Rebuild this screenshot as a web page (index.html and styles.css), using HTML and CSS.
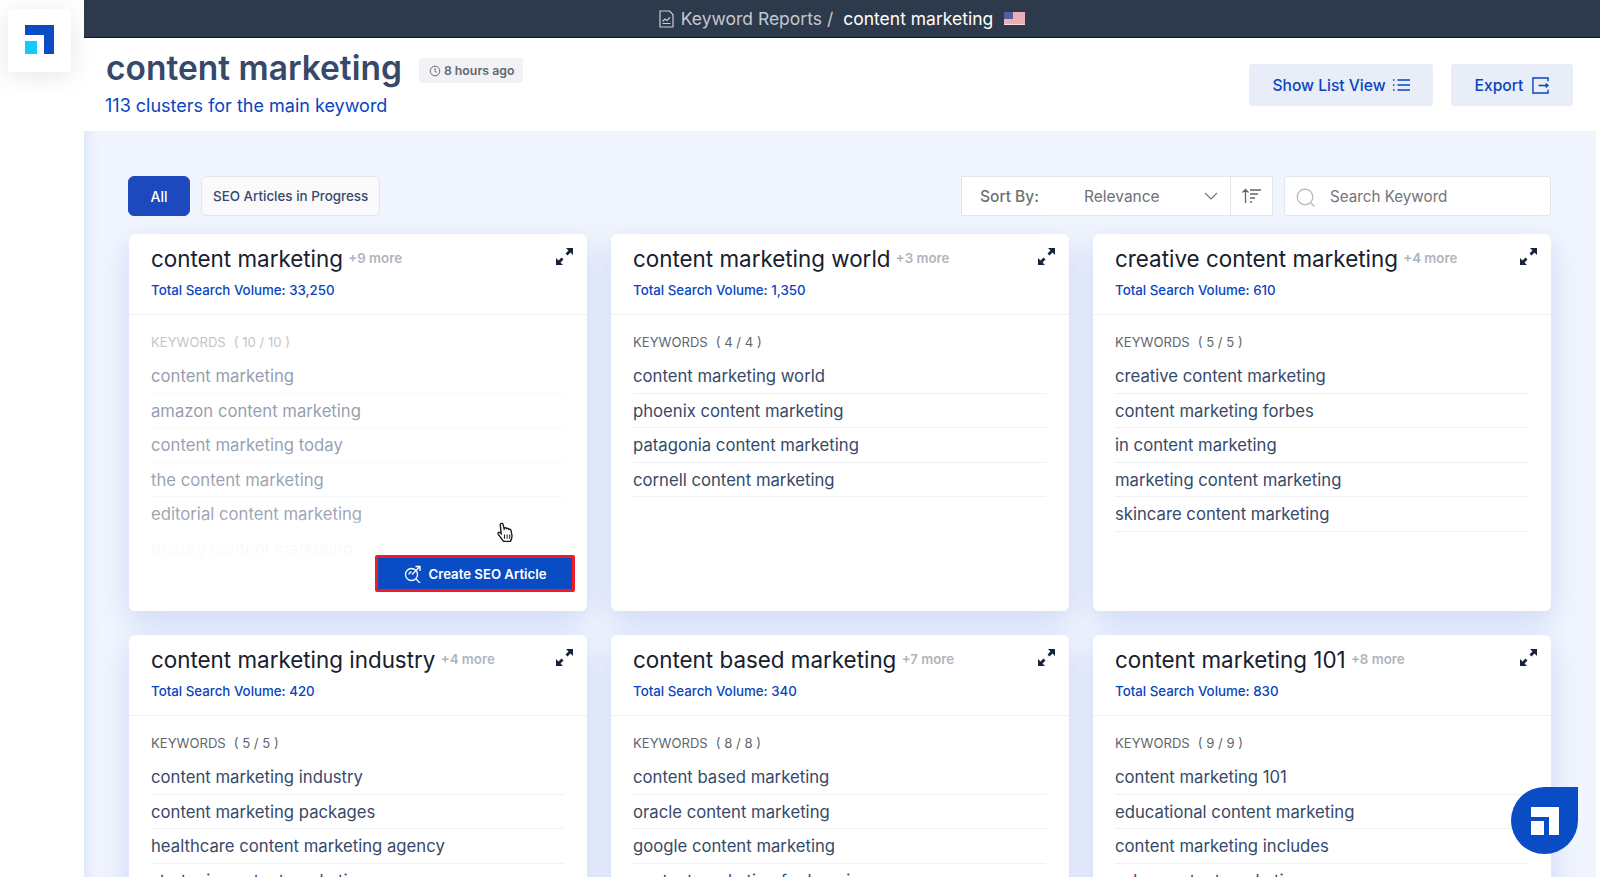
FILE: index.html
```html
<!DOCTYPE html>
<html lang="en">
<head>
<meta charset="utf-8">
<title>content marketing</title>
<link rel="stylesheet" href="styles.css">
</head>
<body>
<aside class="rail">
  <div class="logo-box">
    <svg width="29" height="29" viewBox="0 0 29 29"><path d="M0 0h29v29H19V10H0z" fill="#0a4cc4"/><rect y="16" width="12" height="13" fill="#12ccff"/></svg>
  </div>
</aside>
<div class="page">
  <div class="topbar">
    <svg class="doc" width="15" height="18" viewBox="0 0 15 18" fill="none" stroke="#c9ced6" stroke-width="1.200"><path d="M1 1h9.500L14 4.500V17H1z"/><path d="M3.500 13.500h8M3.500 11.500l2.500-2.500 2 1.500 3-3"/></svg>
    <span class="crumb">Keyword Reports /</span>
    <span class="crumb-current">content marketing</span>
    <svg class="flag" width="21" height="13" viewBox="0 0 21 13"><rect width="21" height="13" fill="#f4dfe2"/><path d="M0 1h21M0 3h21M0 5h21M0 7h21M0 9h21M0 11h21" stroke="#e2808c" stroke-width="1"/><rect width="9" height="7" fill="#565d9c"/></svg>
  </div>
  <header class="head">
    <div class="head-left">
      <div class="title-row">
        <h1>content marketing</h1>
        <span class="ago"><svg width="12" height="12" viewBox="0 0 12 12" fill="none" stroke="#6b6f76"><circle cx="6" cy="6" r="4.800"/><path d="M6 3v3.200l2 1.300"/></svg>8 hours ago</span>
      </div>
      <p class="sub">113 clusters for the main keyword</p>
    </div>
    <div class="head-actions">
      <button class="soft-btn list-btn">Show List View
        <svg width="17" height="14" viewBox="0 0 17 14" fill="none" stroke="#0a44c0" stroke-width="1.500"><path d="M4.500 2H17M4.500 7H17M4.500 12H17M0 2h1.500M0 7h1.500M0 12h1.500"/></svg>
      </button>
      <button class="soft-btn export-btn">Export
        <svg width="17" height="17" viewBox="0 0 18 18" fill="none" stroke="#0a44c0" stroke-width="1.500"><path d="M17 4.500V1H1v16h16v-3.500M7 9h10M14.500 6.800 17 9l-2.500 2.200"/></svg>
      </button>
    </div>
  </header>
  <main class="main">
    <div class="toolbar">
      <div class="tabs">
        <button class="tab tab-on">All</button>
        <button class="tab">SEO Articles in Progress</button>
      </div>
      <div class="tools">
        <div class="sort">
          <span class="sort-label">Sort By:</span>
          <span class="sort-value">Relevance</span>
          <svg width="14" height="8" viewBox="0 0 14 8" fill="none" stroke="#6f7277" stroke-width="1.100"><path d="M1 1l6 6 6-6"/></svg>
        </div>
        <div class="sort-dir">
          <svg width="21" height="16" viewBox="0 0 21 16" fill="none" stroke="#62666c" stroke-width="1.300"><path d="M4.500 15V1.500M1.500 4.500l3-3 3 3M9 2h11M9 6h8M9 10h5M9 14h2"/></svg>
        </div>
        <div class="search">
          <svg width="20" height="20" viewBox="0 0 20 20" fill="none" stroke="#b4b7bb" stroke-width="1.200"><circle cx="9" cy="9" r="7.800"/><path d="M15 15l3.500 3.500"/></svg>
          <span>Search Keyword</span>
        </div>
      </div>
    </div>
    <section class="grid">
      <article class="card card-hover">
        <div class="card-head">
          <h2>content marketing <small>+9 more</small></h2>
          <p class="volume">Total Search Volume: 33,250</p>
          <svg class="expand" width="17" height="17" viewBox="0 0 17 17" fill="#16233a"><path d="M10 0h7v7l-2.500-2.500-3 3-2-2 3-3zM0 10l2.500 2.500 3-3 2 2-3 3L7 17H0z"/></svg>
        </div>
        <div class="card-body">
          <p class="kw-label">KEYWORDS<span>( 10 / 10 )</span></p>
          <ul class="kw-list">
            <li>content marketing</li>
            <li>amazon content marketing</li>
            <li>content marketing today</li>
            <li>the content marketing</li>
            <li>editorial content marketing</li>
            <li>beauty content marketing</li>
          </ul>
        </div>
        <div class="fade"></div>
        <button class="create">
          <svg width="18" height="18" viewBox="0 0 18 18" fill="none" stroke="#fff" stroke-width="1.300"><circle cx="7.500" cy="9.500" r="6"/><path d="M12 14l4 4M8 9.500 15.500 2M11.500 1.500h4.500V6M5 9.500a2.500 2.500 0 0 1 2.500-2.500"/></svg>
          Create SEO Article
        </button>
        <svg class="hand" width="18" height="22" viewBox="0 0 17 21"><path d="M4.500 1.500c1-.6 2 0 2.200 1l1 4 .3-.8c.9-.5 1.800-.2 2.100.6.900-.5 1.800-.2 2.100.7.900-.3 1.800.1 2 1l1 5c.2 2-.5 3.500-1.500 5.500H7l-5-7c-.6-1 .4-2.200 1.600-1.400l1.300 1L4 3c-.1-.6 0-1.200.5-1.500z" fill="#fff" stroke="#1a1a1a" stroke-width="1.300"/><path d="M8 12v4M10.500 12v4M13 12v4" stroke="#1a1a1a"/></svg>
      </article>
      <article class="card">
        <div class="card-head">
          <h2>content marketing world <small>+3 more</small></h2>
          <p class="volume">Total Search Volume: 1,350</p>
          <svg class="expand" width="17" height="17" viewBox="0 0 17 17" fill="#16233a"><path d="M10 0h7v7l-2.500-2.500-3 3-2-2 3-3zM0 10l2.500 2.500 3-3 2 2-3 3L7 17H0z"/></svg>
        </div>
        <div class="card-body">
          <p class="kw-label">KEYWORDS<span>( 4 / 4 )</span></p>
          <ul class="kw-list">
            <li>content marketing world</li>
            <li>phoenix content marketing</li>
            <li>patagonia content marketing</li>
            <li>cornell content marketing</li>
          </ul>
        </div>
      </article>
      <article class="card">
        <div class="card-head">
          <h2>creative content marketing <small>+4 more</small></h2>
          <p class="volume">Total Search Volume: 610</p>
          <svg class="expand" width="17" height="17" viewBox="0 0 17 17" fill="#16233a"><path d="M10 0h7v7l-2.500-2.500-3 3-2-2 3-3zM0 10l2.500 2.500 3-3 2 2-3 3L7 17H0z"/></svg>
        </div>
        <div class="card-body">
          <p class="kw-label">KEYWORDS<span>( 5 / 5 )</span></p>
          <ul class="kw-list">
            <li>creative content marketing</li>
            <li>content marketing forbes</li>
            <li>in content marketing</li>
            <li>marketing content marketing</li>
            <li>skincare content marketing</li>
          </ul>
        </div>
      </article>
      <article class="card">
        <div class="card-head">
          <h2>content marketing industry <small>+4 more</small></h2>
          <p class="volume">Total Search Volume: 420</p>
          <svg class="expand" width="17" height="17" viewBox="0 0 17 17" fill="#16233a"><path d="M10 0h7v7l-2.500-2.500-3 3-2-2 3-3zM0 10l2.500 2.500 3-3 2 2-3 3L7 17H0z"/></svg>
        </div>
        <div class="card-body">
          <p class="kw-label">KEYWORDS<span>( 5 / 5 )</span></p>
          <ul class="kw-list">
            <li>content marketing industry</li>
            <li>content marketing packages</li>
            <li>healthcare content marketing agency</li>
            <li>strategic content marketing</li>
          </ul>
        </div>
      </article>
      <article class="card">
        <div class="card-head">
          <h2>content based marketing <small>+7 more</small></h2>
          <p class="volume">Total Search Volume: 340</p>
          <svg class="expand" width="17" height="17" viewBox="0 0 17 17" fill="#16233a"><path d="M10 0h7v7l-2.500-2.500-3 3-2-2 3-3zM0 10l2.500 2.500 3-3 2 2-3 3L7 17H0z"/></svg>
        </div>
        <div class="card-body">
          <p class="kw-label">KEYWORDS<span>( 8 / 8 )</span></p>
          <ul class="kw-list">
            <li>content based marketing</li>
            <li>oracle content marketing</li>
            <li>google content marketing</li>
            <li>content marketing for hospice</li>
          </ul>
        </div>
      </article>
      <article class="card">
        <div class="card-head">
          <h2>content marketing 101 <small>+8 more</small></h2>
          <p class="volume">Total Search Volume: 830</p>
          <svg class="expand" width="17" height="17" viewBox="0 0 17 17" fill="#16233a"><path d="M10 0h7v7l-2.500-2.500-3 3-2-2 3-3zM0 10l2.500 2.500 3-3 2 2-3 3L7 17H0z"/></svg>
        </div>
        <div class="card-body">
          <p class="kw-label">KEYWORDS<span>( 9 / 9 )</span></p>
          <ul class="kw-list">
            <li>content marketing 101</li>
            <li>educational content marketing</li>
            <li>content marketing includes</li>
            <li>sales content marketing</li>
          </ul>
        </div>
      </article>
    </section>
  </main>
</div>
<div class="chat">
  <svg width="28" height="28" viewBox="0 0 28 28"><path d="M0 0h28v28H18V10H0z" fill="#fff"/><rect y="14" width="13" height="14" fill="#fff"/></svg>
</div>
</body>
</html>
```

FILE: styles.css
```css
* { box-sizing: border-box; }
html, body { margin: 0; height: 877px; overflow: hidden; }
body { display: flex; background: #fff; font-family: Inter, "Liberation Sans", sans-serif; color: #1a2333; }
h1, h2, p, ul { margin: 0; padding: 0; }
button { font-family: inherit; cursor: pointer; }

.rail { width: 84px; flex: none; padding: 9px 8px; }
.logo-box { width: 63px; height: 63px; background: #fff; border-radius: 4px; box-shadow: 0 4px 24px rgba(40, 60, 100, .12); display: flex; align-items: center; justify-content: center; }
.logo-box svg { margin: -2px 0 0 0; }

.page { flex: 1; min-width: 0; display: flex; flex-direction: column; padding-right: 4px; }
.topbar { height: 38px; flex: none; background: #2d3a4c; border-bottom: 1px solid #11151c; display: flex; align-items: center; justify-content: center; gap: 7px; font-size: 17.5px; margin-right: -4px; }
.crumb { color: #c3c8cf; }
.crumb-current { color: #fff; margin-left: 3px; }
.flag { margin-left: 4px; }

.head { height: 93px; flex: none; display: flex; justify-content: space-between; padding: 9px 23px 0 22px; }
.title-row { display: flex; align-items: center; gap: 17px; height: 42px; }
h1 { font-size: 33.5px; font-weight: 600; color: #36496a; }
.ago { display: inline-flex; align-items: center; gap: 3px; height: 25px; padding: 0 9px 0 10px; background: #f1f2f5; border-radius: 3px; font-size: 12.3px; font-weight: 600; color: #64676d; margin-top: 5px; }
.sub { font-size: 18px; color: #0a44c0; margin-top: 5px; margin-left: -1px; line-height: 24px; }
.head-actions { display: flex; gap: 18px; padding-top: 17px; }
.soft-btn { height: 42px; border: 0; border-radius: 3px; background: #e8edf8; color: #0a44c0; font-size: 15.6px; font-weight: 500; display: flex; align-items: center; justify-content: center; gap: 7px; }
.list-btn { width: 184px; }
.export-btn { width: 122px; gap: 9px; }

.main { flex: 1; background: #f1f5fe; padding: 45px 45px 0 45px; box-shadow: inset 14px 0 14px -10px rgba(170, 190, 235, .28); overflow: hidden; }
.toolbar { display: flex; justify-content: space-between; height: 40px; }
.tabs { display: flex; gap: 11px; margin-left: -1px; }
.tab { height: 40px; padding: 0 11px; border: 1px solid #e4e6ea; border-radius: 6px; background: #fafafb; color: #36496a; font-size: 13.4px; font-weight: 500; }
.tab-on { width: 62px; border-color: #1e48bd; background: #1e48bd; color: #fff; font-size: 14px; }
.tools { display: flex; }
.sort { width: 270px; height: 40px; background: #fff; border: 1px solid #e4e6ea; display: flex; align-items: center; padding: 0 12px 0 18px; font-size: 15.5px; color: #6d7075; }
.sort-label { width: 104px; font-weight: 500; }
.sort-value { flex: 1; }
.sort-dir { width: 42px; height: 40px; background: #fff; border: 1px solid #e4e6ea; border-left: 0; display: flex; align-items: center; justify-content: center; }
.search { width: 267px; height: 40px; margin-left: 11px; background: #fff; border: 1px solid #e4e6ea; border-radius: 3px; display: flex; align-items: center; gap: 14px; padding: 3px 12px 0 11px; font-size: 15.2px; color: #727579; }
.search span { margin-top: -3px; }

.grid { display: grid; grid-template-columns: repeat(3, 458px); grid-auto-rows: 377px; gap: 24px; margin-top: 18px; }
.card { position: relative; background: #fff; border-radius: 6px; box-shadow: 0 10px 30px rgba(60, 100, 210, .2); overflow: hidden; }
.card-head { position: relative; height: 81px; padding: 9px 22px 0; border-bottom: 1px solid #f0f1f3; }
h2 { font-size: 22.4px; font-weight: 400; color: #17202e; line-height: 30px; white-space: nowrap; }
h2 small { font-size: 13.3px; font-weight: 600; color: #b0b4bc; vertical-align: 4px; margin-left: -1px; }
.volume { font-size: 13.3px; font-weight: 500; color: #0a44c0; margin-top: 6px; line-height: 20px; }
.expand { position: absolute; top: 14px; right: 14px; }
.card-body { padding: 19px 23px 0 22px; }
.kw-label { font-size: 13.1px; line-height: 17px; color: #62666c; margin-bottom: 8px; }
.kw-label span { margin-left: 8px; word-spacing: 0; }
.kw-list { list-style: none; }
.kw-list li { height: 34.5px; line-height: 34px; font-size: 16.7px; color: #36496a; border-bottom: 1px solid #f0f1f3; white-space: nowrap; }

.card-hover .kw-label { opacity: .7; }
.fade { position: absolute; left: 0; right: 0; top: 100px; bottom: 0; background: linear-gradient(to bottom, rgba(255,255,255,.45) 0, rgba(255,255,255,.5) 66%, rgba(255,255,255,.95) 73%, #fff 84%); }
.create { position: absolute; left: 246px; top: 321px; width: 200px; height: 37px; background: #0a4cc4; border: 3px solid #f01b24; border-radius: 2px; color: #fff; font-size: 13.2px; font-weight: 600; display: flex; align-items: center; justify-content: center; gap: 7px; padding: 0; }
.hand { position: absolute; left: 367px; top: 288px; }

.chat { position: absolute; left: 1511px; top: 787px; width: 67px; height: 67px; background: #0a4cc4; border-radius: 50% 0 50% 50%; display: flex; align-items: center; justify-content: center; }
```
